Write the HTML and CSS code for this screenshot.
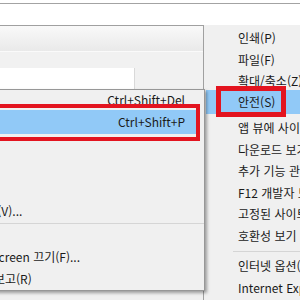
FILE: index.html
```html
<!DOCTYPE html>
<html lang="ko">
<head>
  <meta charset="UTF-8">
  <title>도구 - 안전</title>
  <link rel="stylesheet" href="styles.css">
</head>
<body>
  <div class="window">
    <div class="titlebar"></div>
    <div class="toolbar"></div>
    <div class="tabs">
      <div class="field"></div>
    </div>
  </div>

  <!-- 도구 메뉴 -->
  <div class="menu tools">
    <div class="item">인쇄(P)</div>
    <div class="item">파일(F)</div>
    <div class="item">확대/축소(Z)</div>
    <div class="item active">안전(S)</div>
    <div class="item">앱 뷰에 사이트 추가(A)</div>
    <div class="item">다운로드 보기(N)</div>
    <div class="item">추가 기능 관리(M)</div>
    <div class="item">F12 개발자 도구(L)</div>
    <div class="item">고정된 사이트로 이동(G)</div>
    <div class="item">호환성 보기 설정(B)</div>
    <div class="sep"></div>
    <div class="item">인터넷 옵션(O)</div>
    <div class="item">Internet Explorer 정보(A)</div>
  </div>

  <!-- 안전 하위 메뉴 -->
  <div class="menu safety">
    <div class="item first"><span>검색 기록 삭제(D)...</span><span>Ctrl+Shift+Del</span></div>
    <div class="item active"><span>InPrivate 브라우징(I)</span><span>Ctrl+Shift+P</span></div>
    <div class="item"><span>추적 방지 켜기(K)</span></div>
    <div class="item"><span>ActiveX 필터링(X)</span></div>
    <div class="item"><span>추적 안 함 요청 켜기(D)</span></div>
    <div class="item"><span>웹 페이지 개인 정보 보호 정책(V)...</span></div>
    <div class="sep"></div>
    <div class="item"><span>이 웹 사이트 확인(C)</span></div>
    <div class="item"><span>Windows Defender SmartScreen 끄기(F)...</span></div>
    <div class="item"><span>안전하지 않은 웹사이트 문제 보고(R)</span></div>
  </div>

  <div class="mark mark-safety"></div>
  <div class="mark mark-tools"></div>
</body>
</html>
```

FILE: styles.css
```css
body {
  margin: 0;
  width: 300px;
  height: 300px;
  overflow: hidden;
  position: relative;
  background: #f0f0f0;
  font-family: "Noto Sans CJK KR", sans-serif;
  font-size: 12px;
  color: #1a1a1a;
}

.window {
  background: #fff;
  padding-top: 3px;
}

.titlebar {
  height: 21px;
  background: #fff;
  border-top: 1px solid #a3a3a3;
  border-bottom: 1px solid #a0a0a0;
}

.toolbar {
  height: 25px;
  background: linear-gradient(#f9f9f9, #e9e9e9);
  border-bottom: 1px solid #fafafa;
}

.tabs {
  height: 22px;
  padding-top: 16px;
  background: #f1f1f1;
}

.field {
  width: 134px;
  height: 21px;
  background: #fff;
  border-right: 1px solid #d9d9d9;
  border-bottom: 1px solid #c9c9c9;
}

/* 팝업 메뉴 */
.menu {
  position: absolute;
  box-sizing: border-box;
  background: #f0f0f0;
  white-space: nowrap;
  overflow: hidden;
}

.sep {
  height: 1px;
  background: #d5d5d5;
}

.tools {
  left: 203px;
  top: 25px;
  width: 130px;
  height: 290px;
  padding: 2px 0 0 2px;
  border-left: 1px solid #a0a0a0;
}

.tools .item {
  height: 21.5px;
  line-height: 21.5px;
  padding-left: 32px;
}

.tools .item.active {
  height: 24px;
  line-height: 24px;
  margin: -2px 0 3.5px;
  background: #91c9f7;
}

.tools .sep {
  margin: 5px 0 3px 27px;
}

.safety {
  left: -190px;
  top: 89px;
  width: 395px;
  border: 1px solid #979797;
  box-shadow: 2px 2px 3px rgba(0, 0, 0, 0.35);
}

.safety .item {
  display: flex;
  justify-content: space-between;
  height: 22px;
  line-height: 22px;
  padding: 0 19px 0 37px;
}

.safety .item.first {
  height: 20px;
  line-height: 20px;
}

.safety .item.active {
  height: 24px;
  line-height: 24px;
  margin-right: 8px;
  padding-right: 11px;
  background: #91c9f7;
}

.safety .sep {
  margin: 1px 0 0 35px;
}

/* 빨간 강조 표시 */
.mark {
  position: absolute;
  box-sizing: border-box;
  border: 4px solid #e3141f;
}

.mark-safety {
  left: -10px;
  top: 104px;
  width: 210px;
  height: 37px;
}

.mark-tools {
  left: 216px;
  top: 86px;
  width: 70px;
  height: 31px;
  border-width: 5px;
}
```
